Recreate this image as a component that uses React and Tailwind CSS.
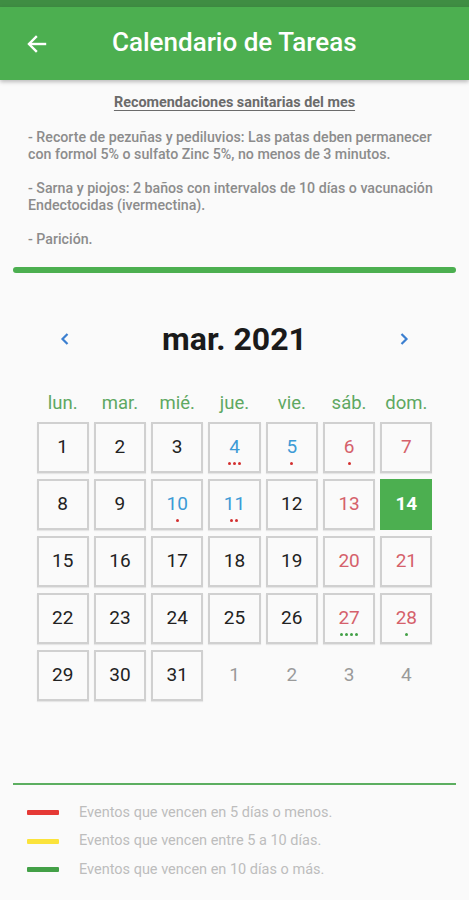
import React from "react";

const weekdays = ["lun.", "mar.", "mié.", "jue.", "vie.", "sáb.", "dom."];

const BLUE = "text-[#3d9bd6]";
const RED = "text-[#d5616b]";
const BLACK = "text-[#222]";
const GRAY = "text-[#9a9a9a]";

const days = [
  { n: 1, c: BLACK }, { n: 2, c: BLACK }, { n: 3, c: BLACK },
  { n: 4, c: BLUE, dots: ["r", "r", "r"] }, { n: 5, c: BLUE, dots: ["r"] },
  { n: 6, c: RED, dots: ["r"] }, { n: 7, c: RED },
  { n: 8, c: BLACK }, { n: 9, c: BLACK }, { n: 10, c: BLUE, dots: ["r"] },
  { n: 11, c: BLUE, dots: ["r", "r"] }, { n: 12, c: BLACK }, { n: 13, c: RED },
  { n: 14, c: "text-white", today: true },
  { n: 15, c: BLACK }, { n: 16, c: BLACK }, { n: 17, c: BLACK }, { n: 18, c: BLACK },
  { n: 19, c: BLACK }, { n: 20, c: RED }, { n: 21, c: RED },
  { n: 22, c: BLACK }, { n: 23, c: BLACK }, { n: 24, c: BLACK }, { n: 25, c: BLACK },
  { n: 26, c: BLACK }, { n: 27, c: RED, dots: ["g", "g", "g", "g"] }, { n: 28, c: RED, dots: ["g"] },
  { n: 29, c: BLACK }, { n: 30, c: BLACK }, { n: 31, c: BLACK },
  { n: 1, c: GRAY, out: true }, { n: 2, c: GRAY, out: true }, { n: 3, c: GRAY, out: true }, { n: 4, c: GRAY, out: true },
];

function Cell({ d }) {
  const base = "relative h-[51px] flex items-center justify-center";
  const box = d.out
    ? ""
    : d.today
    ? "bg-[#4caf50] border-2 border-[#4caf50]"
    : "border-2 border-[#d0d0d0] shadow-[0_1px_1px_rgba(0,0,0,0.08)]";
  return (
    <div className={`${base} ${box}`}>
      <span className={`text-[19px] ${d.today ? "font-bold" : ""} ${d.c} leading-none -mt-[1px]`}>{d.n}</span>
      {d.dots && (
        <div className="absolute left-0 right-0 bottom-[6px] flex justify-center gap-[2px]">
          {d.dots.map((t, i) => (
            <span
              key={i}
              className={`w-[3px] h-[3px] rounded-full ${t === "r" ? "bg-[#d32f2f]" : "bg-[#43a047]"}`}
            />
          ))}
        </div>
      )}
    </div>
  );
}

export default function App() {
  return (
    <div className="w-[469px] h-[900px] bg-[#fafafa] flex flex-col overflow-hidden" style={{ fontFamily: "Roboto, 'Noto Sans', sans-serif" }}>
      <div className="h-[7px] bg-[#3f8d43]" />
      <div className="h-[73px] bg-[#4caf50] flex items-center shadow-[0_2px_4px_rgba(0,0,0,0.25)] relative z-10">
        <div className="w-[74px] flex items-center pl-[25px]">
          <svg width="24" height="24" viewBox="0 0 24 24" fill="none" stroke="white" strokeWidth="2.4" strokeLinecap="square">
            <path d="M20 12H5" />
            <path d="M11 5l-7 7 7 7" />
          </svg>
        </div>
        <div className="text-white text-[26px] font-medium ml-[38px] -mt-[2px]">Calendario de Tareas</div>
      </div>

      <div className="px-[28px] pt-[14px]">
        <div className="text-center text-[14.4px] font-bold text-[#6b6b6b] underline underline-offset-[3px] leading-[18px]">
          Recomendaciones sanitarias del mes
        </div>
        <div className="mt-[17px] text-[14.2px] font-medium text-[#8c8c8c] leading-[17px] flex flex-col gap-[17px]">
          <p>- Recorte de pezuñas y pediluvios: Las patas deben permanecer con formol 5% o sulfato Zinc 5%, no menos de 3 minutos.</p>
          <p>- Sarna y piojos: 2 baños con intervalos de 10 días o vacunación Endectocidas (ivermectina).</p>
          <p>- Parición.</p>
        </div>
      </div>

      <div className="mx-[13px] mt-[19px] h-[6px] rounded-full bg-[#4caf50]" />

      <div className="mt-[50px] flex items-center justify-between px-[57px]">
        <svg width="16" height="16" viewBox="0 0 16 16" fill="none" stroke="#3b7fd0" strokeWidth="2.2">
          <path d="M10.5 3L5.5 8l5 5" />
        </svg>
        <div className="text-[32px] font-bold text-[#1a1a1a] leading-none">mar. 2021</div>
        <svg width="16" height="16" viewBox="0 0 16 16" fill="none" stroke="#3b7fd0" strokeWidth="2.2">
          <path d="M5.5 3l5 5-5 5" />
        </svg>
      </div>

      <div className="mx-auto w-[396px] mt-[39px]">
        <div className="grid grid-cols-7 gap-x-[5px]">
          {weekdays.map((w) => (
            <div key={w} className="text-center text-[18.5px] text-[#5ea862] leading-none">{w}</div>
          ))}
        </div>
        <div className="grid grid-cols-7 gap-x-[5px] gap-y-[6px] mt-[9px]">
          {days.map((d, i) => (
            <Cell key={i} d={d} />
          ))}
        </div>
      </div>

      <div className="mx-[13px] mt-[82px] h-[2px] bg-[#5cae60]" />

      <div className="pl-[27px] mt-[20px] flex flex-col gap-[12.5px]">
        {[
          ["bg-[#e53935]", "Eventos que vencen en 5 días o menos."],
          ["bg-[#fbe33b]", "Eventos que vencen entre 5 a 10 días."],
          ["bg-[#43a047]", "Eventos que vencen en 10 días o más."],
        ].map(([c, t]) => (
          <div key={t} className="flex items-center h-[16px]">
            <span className={`w-[32px] h-[5px] rounded-[1px] ${c}`} />
            <span className="ml-[20px] text-[14.5px] text-[#bdbdbd]">{t}</span>
          </div>
        ))}
      </div>
    </div>
  );
}
